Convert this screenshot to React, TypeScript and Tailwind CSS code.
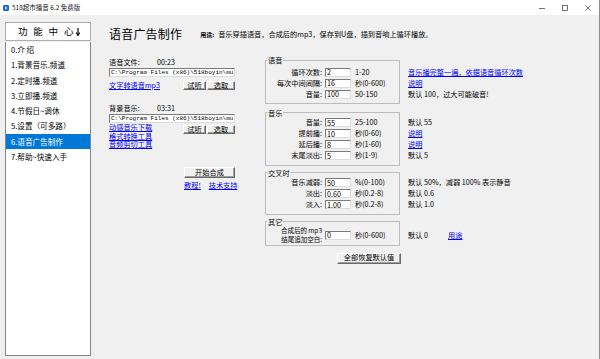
import React from 'react';

const Link = ({ children, className = '' }: { children: React.ReactNode; className?: string }) => (
  <span className={`text-[#0000ff] underline underline-offset-[1px] whitespace-nowrap cursor-pointer ${className}`}>{children}</span>
);

const Button = ({ label, className = '' }: { label: string; className?: string }) => (
  <button className={`flex items-center justify-center bg-[#f0f0f0] border border-t-white border-l-white border-r-[#696969] border-b-[#696969] shadow-[inset_-1px_-1px_0_#a0a0a0] text-[7.2px] leading-none text-black ${className}`}>
    {label}
  </button>
);

const TextBox = ({ value, className = '' }: { value: string; className?: string }) => (
  <input
    readOnly
    value={value}
    className={`bg-white border border-t-[#7a7a7a] border-l-[#7a7a7a] border-r-[#dcdcdc] border-b-[#dcdcdc] px-[1px] leading-none text-black outline-none ${className}`}
  />
);

const FieldRow = ({ label, value, range, h = 'h-[11px]' }: { label: React.ReactNode; value: string; range: string; h?: string }) => (
  <div className={`flex items-center ${h}`}>
    <div className="w-[55px] text-right whitespace-nowrap">{label}</div>
    <TextBox value={value} className="ml-[3px] w-[26px] h-[9px] text-[7.2px]" />
    <span className="ml-[4px] whitespace-nowrap">{range}</span>
  </div>
);

const Group = ({
  title,
  children,
  notes,
  className = '',
  bodyClass = '',
  notesClass = '',
}: {
  title: string;
  children: React.ReactNode;
  notes: React.ReactNode;
  className?: string;
  bodyClass?: string;
  notesClass?: string;
}) => (
  <div className={`flex ${className}`}>
    <fieldset className={`w-[135px] border border-[#bcbcbc] px-[1px] ${bodyClass}`}>
      <legend className="px-[1px] leading-[8px]">{title}</legend>
      {children}
    </fieldset>
    <div className={`ml-[8px] flex flex-col ${notesClass}`}>{notes}</div>
  </div>
);

const Note = ({ children, h = 'h-[11px]' }: { children: React.ReactNode; h?: string }) => (
  <div className={`flex items-center whitespace-nowrap ${h}`}>{children}</div>
);

const TitleBar = () => (
  <div className="h-[15px] bg-white flex items-center shrink-0">
    <svg width="6" height="6" viewBox="0 0 6 6" className="ml-[3px]">
      <rect x="0" y="0" width="6" height="6" rx="1.2" fill="#1f6fc5" />
      <path d="M2.2 1.6 L4.4 3 L2.2 4.4 Z" fill="#fff" />
    </svg>
    <span className="ml-[3px] text-[6.5px] text-[#222]">518超市播音 6.2 免费版</span>
    <div className="ml-auto flex h-full">
      <div className="w-[23px] flex items-center justify-center">
        <svg width="6" height="6" viewBox="0 0 6 6">
          <path d="M0 3.5 H6" stroke="#333" strokeWidth="0.7" />
        </svg>
      </div>
      <div className="w-[23px] flex items-center justify-center">
        <svg width="6" height="6" viewBox="0 0 6 6">
          <rect x="0.5" y="0.5" width="5" height="5" fill="none" stroke="#333" strokeWidth="0.7" />
        </svg>
      </div>
      <div className="w-[23px] flex items-center justify-center">
        <svg width="6" height="6" viewBox="0 0 6 6">
          <path d="M0.3 0.3 L5.7 5.7 M5.7 0.3 L0.3 5.7" stroke="#333" strokeWidth="0.7" />
        </svg>
      </div>
    </div>
  </div>
);

const menu = [
  '0.介 绍',
  '1.背景音乐.频道',
  '2.定时播.频道',
  '3.立即播.频道',
  '4.节假日~调休',
  '5.设置（可多路）',
  '6.语音广告制作',
  '7.帮助~快速入手',
];

const Sidebar = () => (
  <div className="ml-[5px] mt-[7px] mb-[3px] w-[86px] flex flex-col shrink-0">
    <div className="h-[19px] bg-white border border-[#adadad] flex items-center pl-[12px] text-[9.5px] text-black">
      <span className="tracking-[5.8px]">功能中</span>
      <span>心</span>
      <svg width="4" height="8" viewBox="0 0 4 8" className="ml-[2.5px]">
        <path d="M2 0 V7" stroke="#000" strokeWidth="1.2" />
        <path d="M0.2 4.6 L2 7.6 L3.8 4.6" fill="none" stroke="#000" strokeWidth="1.1" />
      </svg>
    </div>
    <div className="flex-1 bg-white border border-[#828790] border-t-0 mt-[1px] text-[7.6px]">
      {menu.map((m, i) => (
        <div
          key={m}
          className={`h-[15.3px] flex items-center pl-[5px] whitespace-nowrap ${i === 6 ? 'bg-[#0078d7] text-white' : 'text-black'}`}
        >
          {m}
        </div>
      ))}
    </div>
  </div>
);

const LeftPanel = () => (
  <div className="w-[126px] flex flex-col shrink-0">
    <div className="mt-[1px] h-[10px] flex items-center">
      <span className="w-[48px]">语音文件:</span>
      <span>00:23</span>
    </div>
    <TextBox value="C:\Program Files (x86)\518boyin\mu" className="mt-[1px] h-[9px] w-full text-[6px] font-['Liberation_Mono',monospace]" />
    <div className="mt-[4px] h-[9px] flex items-center justify-between">
      <Link>文字转语音mp3</Link>
      <div className="flex gap-[1px]">
        <Button label="试听" className="w-[23px] h-[9px]" />
        <Button label="选取" className="w-[28px] h-[9px]" />
      </div>
    </div>

    <div className="mt-[13px] h-[10px] flex items-center">
      <span className="w-[48px]">背景音乐:</span>
      <span>03:31</span>
    </div>
    <TextBox value="C:\Program Files (x86)\518boyin\mu" className="mt-[1px] h-[9px] w-full text-[6px] font-['Liberation_Mono',monospace]" />
    <div className="flex items-start justify-between">
      <div className="flex flex-col leading-[8.5px]">
        <Link>动感音乐下载</Link>
        <Link>格式转换工具</Link>
        <Link>音频剪切工具</Link>
      </div>
      <div className="mt-[2px] flex gap-[1px]">
        <Button label="试听" className="w-[23px] h-[9px]" />
        <Button label="选取" className="w-[28px] h-[9px]" />
      </div>
    </div>

    <Button label="开始合成" className="self-end mt-[18px] w-[51px] h-[11.5px]" />
    <div className="self-end w-[51px] mt-[2px] h-[10px] flex items-center">
      <Link>教程!</Link>
      <Link className="ml-[8px]">技术支持</Link>
    </div>
  </div>
);

const RightPanel = () => (
  <div className="ml-[30px] flex flex-col">
    <Group
      title="语音"
      bodyClass="pt-[2.5px] pb-[3px]"
      notesClass="pt-[11px]"
      notes={
        <>
          <Note><Link>音乐播完整一遍，依据语音循环次数</Link></Note>
          <Note><Link>说明</Link></Note>
          <Note>默认 100，过大可能破音!</Note>
        </>
      }
    >
      <FieldRow label="循环次数:" value="2" range="1-20" />
      <FieldRow label="每次中间间隔:" value="16" range="秒(0-600)" />
      <FieldRow label="音量:" value="100" range="50-150" />
    </Group>

    <Group
      title="音乐"
      className="mt-[5px]"
      bodyClass="pt-[0.5px] pb-[3.5px]"
      notesClass="pt-[8.5px]"
      notes={
        <>
          <Note>默认 55</Note>
          <Note><Link>说明</Link></Note>
          <Note><Link>说明</Link></Note>
          <Note>默认 5</Note>
        </>
      }
    >
      <FieldRow label="音量:" value="55" range="25-100" />
      <FieldRow label="提前播:" value="10" range="秒(0-60)" />
      <FieldRow label="延后播:" value="8" range="秒(1-60)" />
      <FieldRow label="末尾淡出:" value="5" range="秒(1-9)" />
    </Group>

    <Group
      title="交叉时"
      className="mt-[3px]"
      bodyClass="pt-[0.5px] pb-[4px]"
      notesClass="pt-[8.5px]"
      notes={
        <>
          <Note>默认 50%，减弱 100% 表示静音</Note>
          <Note>默认 0.6</Note>
          <Note>默认 1.0</Note>
        </>
      }
    >
      <FieldRow label="音乐减弱:" value="50" range="%(0-100)" />
      <FieldRow label="淡出:" value="0.60" range="秒(0.2-8)" />
      <FieldRow label="淡入:" value="1.00" range="秒(0.2-8)" />
    </Group>

    <Group
      title="其它"
      className="mt-[2.5px]"
      bodyClass="pt-[0px]"
      notesClass="pt-[8px]"
      notes={
        <Note h="h-[19px]">
          <span className="w-[40px]">默认 0</span>
          <Link>用途</Link>
        </Note>
      }
    >
      <FieldRow
        h="h-[19px]"
        label={
          <div className="flex flex-col text-[6.5px] leading-[9.5px]">
            <span>合成后的 mp3</span>
            <span>结尾追加空白:</span>
          </div>
        }
        value="0"
        range="秒(0-600)"
      />
    </Group>

    <Button label="全部恢复默认值" className="mt-[7px] ml-[72px] w-[64px] h-[11px]" />
  </div>
);

export default function App() {
  return (
    <div className="w-[600px] h-[359px] flex flex-col bg-[#f0f0f0] border-r border-[#8c8c8c] overflow-hidden font-['Noto_Sans_CJK_SC',sans-serif] text-black">
      <TitleBar />
      <div className="flex flex-1 min-h-0">
        <Sidebar />
        <div className="ml-[18px] flex flex-col flex-1 text-[7.2px]">
          <div className="mt-[12px] h-[14px] flex items-center">
            <span className="text-[12px] leading-[14px] tracking-[0.2px]">语音广告制作</span>
            <span className="ml-[18px] text-[6px] font-bold">用途:</span>
            <span className="ml-[4px]">音乐穿插语音，合成后的mp3，保存到U盘，插到音响上循环播放。</span>
          </div>
          <div className="mt-[15px] flex">
            <LeftPanel />
            <RightPanel />
          </div>
        </div>
      </div>
    </div>
  );
}
